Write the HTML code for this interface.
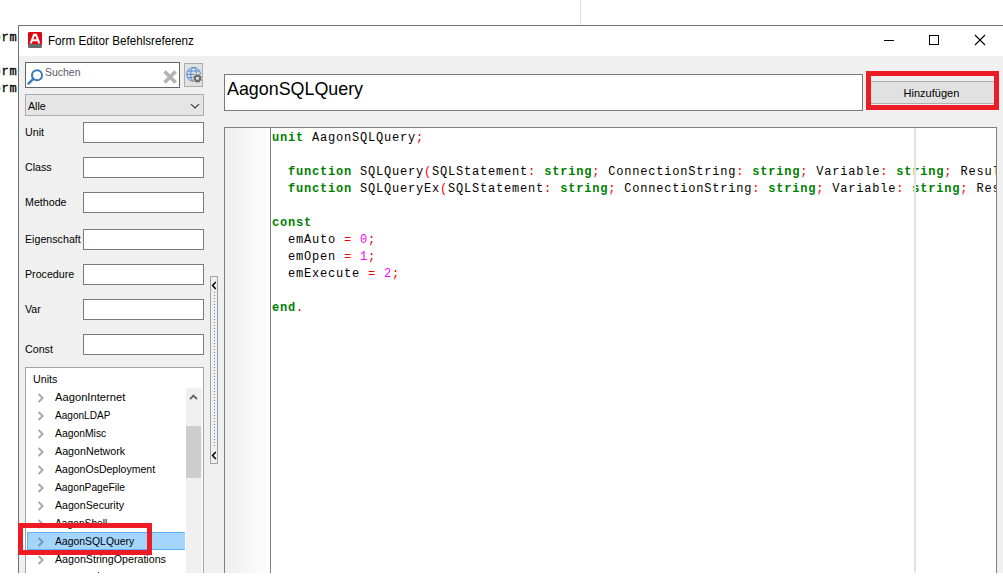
<!DOCTYPE html>
<html><head><meta charset="utf-8">
<style>
*{margin:0;padding:0;box-sizing:border-box}
html,body{width:1003px;height:581px;overflow:hidden;background:#fff;position:relative;font-family:"Liberation Sans",sans-serif;font-size:12px;color:#000}
.a{position:absolute}
.mono{font-family:"Liberation Mono",monospace;font-size:13.333px;white-space:pre;line-height:17px}
.ui{position:absolute;white-space:pre;font-size:11px;line-height:14px;padding-top:0.35px;transform-origin:0 0;color:#000}
.code .k{color:#008000;font-weight:bold}.code .i{color:#000}.code .p{color:#ff0000}.code .n{color:#ff00ff}
.inp{position:absolute;background:#fff;border:1px solid #7a7a7a}
</style></head>
<body>
<!-- background desktop bits -->
<div class="a" style="left:580px;top:0;width:1px;height:25px;background:#e3e3e3"></div>
<div class="a mono" style="left:-6.5px;top:30px;font-size:12px;letter-spacing:0.8px;color:#000;-webkit-text-stroke:0.3px #000">orm</div>
<div class="a mono" style="left:-6.5px;top:64px;font-size:12px;letter-spacing:0.8px;color:#000;-webkit-text-stroke:0.3px #000">orm</div>
<div class="a mono" style="left:-6.5px;top:81px;font-size:12px;letter-spacing:0.8px;color:#000;-webkit-text-stroke:0.3px #000">orm</div>

<!-- window -->
<div id="win" class="a" style="left:18px;top:25px;width:1000px;height:548px;background:#f0f0f0;border-left:1px solid #707070;border-top:1px solid #707070">
</div>
<!-- title bar -->
<div class="a" style="left:19px;top:26px;width:990px;height:30px;background:#fff"></div>
<!-- app icon -->
<div class="a" style="left:28px;top:32px;width:14px;height:16px;border-radius:1.5px;background:#6b6b6b"></div>
<div class="a" style="left:28px;top:32px;width:14px;height:12px;border-radius:1.5px 1.5px 0 0;background:#e30613"></div>
<svg class="a" style="left:28px;top:32px" width="14" height="16" viewBox="0 0 14 16"><path d="M2.7 11.4 L6 2.9 L8 2.9 L11.3 11.4 M4.4 8.3 L9.6 8.3" stroke="#fff" stroke-width="2.1" fill="none"/></svg>
<div class="ui" style="left:48px;top:34px;font-size:12px;transform:scaleX(0.972)">Form Editor Befehlsreferenz</div>
<!-- caption buttons -->
<div class="a" style="left:884px;top:40px;width:10px;height:1px;background:#000"></div>
<div class="a" style="left:929px;top:35px;width:10px;height:10px;border:1px solid #000"></div>
<svg class="a" style="left:974px;top:34px" width="12" height="12" viewBox="0 0 12 12"><path d="M1 1 L11 11 M11 1 L1 11" stroke="#000" stroke-width="1.1"/></svg>

<!-- search box -->
<div class="inp" style="left:25px;top:62px;width:155px;height:26px;border-color:#646464"></div>
<svg class="a" style="left:24px;top:66px" width="20" height="20" viewBox="0 0 20 20"><circle cx="13" cy="9.3" r="5" stroke="#3a78c0" stroke-width="2" fill="none"/><path d="M9.4 12.8 L4.5 17.6" stroke="#3a78c0" stroke-width="2.4" stroke-linecap="round"/></svg>
<div class="ui" style="left:45px;top:64.3px;color:#5a5a66;transform:scaleX(0.95)">Suchen</div>
<svg class="a" style="left:162px;top:69px" width="16" height="16" viewBox="0 0 16 16"><path d="M2.6 2.6 L13.6 13.6 M13.6 2.6 L2.6 13.6" stroke="#b2b2b2" stroke-width="3.6"/></svg>
<!-- globe button -->
<div class="a" style="left:184px;top:63px;width:19px;height:24px;background:#e1e1e1;border:1px solid #adadad"></div>
<svg class="a" style="left:184px;top:63px" width="19" height="24" viewBox="0 0 19 24">
 <g stroke="#4a86d0" stroke-width="1" fill="none">
  <circle cx="9.6" cy="11.4" r="6.9"/>
  <ellipse cx="9.6" cy="11.4" rx="2.9" ry="6.9"/>
  <path d="M2.7 11.4 H16.5 M3.8 8 H15.4 M3.8 14.8 H15.4"/>
 </g>
 <circle cx="13.5" cy="15.3" r="5" fill="#e1e1e1"/>
 <circle cx="13.5" cy="15.3" r="2.6" stroke="#6e6e6e" stroke-width="2" fill="none"/>
 <path d="M16.27 16.45L17.57 16.98M14.65 18.07L15.18 19.37M12.35 18.07L11.82 19.37M10.73 16.45L9.43 16.98M10.73 14.15L9.43 13.62M12.35 12.53L11.82 11.23M14.65 12.53L15.18 11.23M16.27 14.15L17.57 13.62" stroke="#6e6e6e" stroke-width="1.7"/>
</svg>
<!-- dropdown -->
<div class="a" style="left:25px;top:94px;width:179px;height:22px;background:#e5e5e5;border:1px solid #adadad"></div>
<div class="ui" style="left:28px;top:99px;transform:scaleX(0.97)">Alle</div>
<svg class="a" style="left:189px;top:101px" width="12" height="9" viewBox="0 0 12 9"><path d="M2 3.1 L6 7 L10 3.1" stroke="#333" stroke-width="1.1" fill="none"/></svg>

<!-- fields -->
<div class="ui" style="left:24.6px;top:125px;transform:scaleX(0.97)">Unit</div>
<div class="inp" style="left:83px;top:122px;width:121px;height:21px"></div>
<div class="ui" style="left:24.6px;top:160px;transform:scaleX(0.97)">Class</div>
<div class="inp" style="left:83px;top:157px;width:121px;height:21px"></div>
<div class="ui" style="left:24.6px;top:195px;transform:scaleX(0.97)">Methode</div>
<div class="inp" style="left:83px;top:192px;width:121px;height:21px"></div>
<div class="ui" style="left:24.6px;top:232px;transform:scaleX(0.97)">Eigenschaft</div>
<div class="inp" style="left:83px;top:229px;width:121px;height:21px"></div>
<div class="ui" style="left:24.6px;top:267px;transform:scaleX(0.97)">Procedure</div>
<div class="inp" style="left:83px;top:264px;width:121px;height:21px"></div>
<div class="ui" style="left:24.6px;top:302px;transform:scaleX(0.97)">Var</div>
<div class="inp" style="left:83px;top:299px;width:121px;height:21px"></div>
<div class="ui" style="left:24.6px;top:342px;transform:scaleX(0.97)">Const</div>
<div class="inp" style="left:83px;top:334px;width:121px;height:21px"></div>

<!-- tree -->
<div id="tree" class="a" style="left:25px;top:367px;width:179px;height:220px;background:#fff;border:1px solid #a0a3a9;overflow:hidden">
 <div class="ui" style="left:6.8px;top:3.2px;transform:scaleX(0.97)">Units</div>
 <div class="a" style="left:1px;top:164px;width:158px;height:18px;background:#a4d6fd;border:1px solid #5db3fc;border-right:none"></div>
 <div id="rows" class="a" style="left:0;top:20px;width:160px">
 <div class="a" style="left:0;top:0px;width:160px;height:18px"><svg class="a" style="left:11px;top:4.6px" width="8" height="10" viewBox="0 0 8 10"><path d="M1.6 1 L5.6 5 L1.6 9" stroke="#a8a8a8" stroke-width="1.9" fill="none"/></svg><div class="ui" style="left:29px;top:0;line-height:18px;transform:scaleX(1.017)">AagonInternet</div></div>
 <div class="a" style="left:0;top:18px;width:160px;height:18px"><svg class="a" style="left:11px;top:4.6px" width="8" height="10" viewBox="0 0 8 10"><path d="M1.6 1 L5.6 5 L1.6 9" stroke="#a8a8a8" stroke-width="1.9" fill="none"/></svg><div class="ui" style="left:29px;top:0;line-height:18px;transform:scaleX(0.915)">AagonLDAP</div></div>
 <div class="a" style="left:0;top:36px;width:160px;height:18px"><svg class="a" style="left:11px;top:4.6px" width="8" height="10" viewBox="0 0 8 10"><path d="M1.6 1 L5.6 5 L1.6 9" stroke="#a8a8a8" stroke-width="1.9" fill="none"/></svg><div class="ui" style="left:29px;top:0;line-height:18px;transform:scaleX(0.942)">AagonMisc</div></div>
 <div class="a" style="left:0;top:54px;width:160px;height:18px"><svg class="a" style="left:11px;top:4.6px" width="8" height="10" viewBox="0 0 8 10"><path d="M1.6 1 L5.6 5 L1.6 9" stroke="#a8a8a8" stroke-width="1.9" fill="none"/></svg><div class="ui" style="left:29px;top:0;line-height:18px;transform:scaleX(0.973)">AagonNetwork</div></div>
 <div class="a" style="left:0;top:72px;width:160px;height:18px"><svg class="a" style="left:11px;top:4.6px" width="8" height="10" viewBox="0 0 8 10"><path d="M1.6 1 L5.6 5 L1.6 9" stroke="#a8a8a8" stroke-width="1.9" fill="none"/></svg><div class="ui" style="left:29px;top:0;line-height:18px;transform:scaleX(0.957)">AagonOsDeployment</div></div>
 <div class="a" style="left:0;top:90px;width:160px;height:18px"><svg class="a" style="left:11px;top:4.6px" width="8" height="10" viewBox="0 0 8 10"><path d="M1.6 1 L5.6 5 L1.6 9" stroke="#a8a8a8" stroke-width="1.9" fill="none"/></svg><div class="ui" style="left:29px;top:0;line-height:18px;transform:scaleX(0.93)">AagonPageFile</div></div>
 <div class="a" style="left:0;top:108px;width:160px;height:18px"><svg class="a" style="left:11px;top:4.6px" width="8" height="10" viewBox="0 0 8 10"><path d="M1.6 1 L5.6 5 L1.6 9" stroke="#a8a8a8" stroke-width="1.9" fill="none"/></svg><div class="ui" style="left:29px;top:0;line-height:18px;transform:scaleX(0.964)">AagonSecurity</div></div>
 <div class="a" style="left:0;top:126px;width:160px;height:18px"><svg class="a" style="left:11px;top:4.6px" width="8" height="10" viewBox="0 0 8 10"><path d="M1.6 1 L5.6 5 L1.6 9" stroke="#a8a8a8" stroke-width="1.9" fill="none"/></svg><div class="ui" style="left:29px;top:0;line-height:18px;transform:scaleX(0.93)">AagonShell</div></div>
 <div class="a" style="left:0;top:144px;width:160px;height:18px"><svg class="a" style="left:11px;top:4.6px" width="8" height="10" viewBox="0 0 8 10"><path d="M1.6 1 L5.6 5 L1.6 9" stroke="#7592ad" stroke-width="1.9" fill="none"/></svg><div class="ui" style="left:29px;top:0;line-height:18px;transform:scaleX(0.946)">AagonSQLQuery</div></div>
 <div class="a" style="left:0;top:162px;width:160px;height:18px"><svg class="a" style="left:11px;top:4.6px" width="8" height="10" viewBox="0 0 8 10"><path d="M1.6 1 L5.6 5 L1.6 9" stroke="#a8a8a8" stroke-width="1.9" fill="none"/></svg><div class="ui" style="left:29px;top:0;line-height:18px;transform:scaleX(0.97)">AagonStringOperations</div></div>
 </div>
 <div class="a" style="left:160px;top:20px;width:16px;height:200px;background:#f0f0f0"></div>
 <div class="a" style="left:160px;top:58px;width:15px;height:52px;background:#cdcdcd"></div>
 <svg class="a" style="left:160px;top:20px" width="15" height="17" viewBox="0 0 15 17"><path d="M4 11.2 L7.5 7.7 L11 11.2" stroke="#606060" stroke-width="1.9" fill="none"/></svg>
</div>

<!-- splitter -->
<div class="a" style="left:210px;top:276px;width:8px;height:188px;background:#f0f0f0;border:1px solid #a0a0a0"></div>
<svg class="a" style="left:211px;top:281px" width="6" height="9" viewBox="0 0 6 9"><path d="M4.8 1 L1.6 4.5 L4.8 8" stroke="#000" stroke-width="1.5" fill="none"/></svg>
<svg class="a" style="left:211px;top:451px" width="6" height="9" viewBox="0 0 6 9"><path d="M4.8 1 L1.6 4.5 L4.8 8" stroke="#000" stroke-width="1.5" fill="none"/></svg>
<div class="a" style="left:214px;top:292px;width:1px;height:1px;background:#3a8ee6"></div><div class="a" style="left:214px;top:295px;width:1px;height:1px;background:#3a8ee6"></div><div class="a" style="left:214px;top:298px;width:1px;height:1px;background:#3a8ee6"></div><div class="a" style="left:214px;top:301px;width:1px;height:1px;background:#3a8ee6"></div><div class="a" style="left:214px;top:304px;width:1px;height:1px;background:#3a8ee6"></div><div class="a" style="left:214px;top:307px;width:1px;height:1px;background:#3a8ee6"></div><div class="a" style="left:214px;top:310px;width:1px;height:1px;background:#3a8ee6"></div><div class="a" style="left:214px;top:313px;width:1px;height:1px;background:#3a8ee6"></div><div class="a" style="left:214px;top:316px;width:1px;height:1px;background:#3a8ee6"></div><div class="a" style="left:214px;top:319px;width:1px;height:1px;background:#3a8ee6"></div><div class="a" style="left:214px;top:322px;width:1px;height:1px;background:#3a8ee6"></div><div class="a" style="left:214px;top:325px;width:1px;height:1px;background:#3a8ee6"></div><div class="a" style="left:214px;top:328px;width:1px;height:1px;background:#3a8ee6"></div><div class="a" style="left:214px;top:331px;width:1px;height:1px;background:#3a8ee6"></div><div class="a" style="left:214px;top:334px;width:1px;height:1px;background:#3a8ee6"></div><div class="a" style="left:214px;top:337px;width:1px;height:1px;background:#3a8ee6"></div><div class="a" style="left:214px;top:340px;width:1px;height:1px;background:#3a8ee6"></div><div class="a" style="left:214px;top:343px;width:1px;height:1px;background:#3a8ee6"></div><div class="a" style="left:214px;top:346px;width:1px;height:1px;background:#3a8ee6"></div><div class="a" style="left:214px;top:349px;width:1px;height:1px;background:#3a8ee6"></div><div class="a" style="left:214px;top:352px;width:1px;height:1px;background:#3a8ee6"></div><div class="a" style="left:214px;top:355px;width:1px;height:1px;background:#3a8ee6"></div><div class="a" style="left:214px;top:358px;width:1px;height:1px;background:#3a8ee6"></div><div class="a" style="left:214px;top:361px;width:1px;height:1px;background:#3a8ee6"></div><div class="a" style="left:214px;top:364px;width:1px;height:1px;background:#3a8ee6"></div><div class="a" style="left:214px;top:367px;width:1px;height:1px;background:#3a8ee6"></div><div class="a" style="left:214px;top:370px;width:1px;height:1px;background:#3a8ee6"></div><div class="a" style="left:214px;top:373px;width:1px;height:1px;background:#3a8ee6"></div><div class="a" style="left:214px;top:376px;width:1px;height:1px;background:#3a8ee6"></div><div class="a" style="left:214px;top:379px;width:1px;height:1px;background:#3a8ee6"></div><div class="a" style="left:214px;top:382px;width:1px;height:1px;background:#3a8ee6"></div><div class="a" style="left:214px;top:385px;width:1px;height:1px;background:#3a8ee6"></div><div class="a" style="left:214px;top:388px;width:1px;height:1px;background:#3a8ee6"></div><div class="a" style="left:214px;top:391px;width:1px;height:1px;background:#3a8ee6"></div><div class="a" style="left:214px;top:394px;width:1px;height:1px;background:#3a8ee6"></div><div class="a" style="left:214px;top:397px;width:1px;height:1px;background:#3a8ee6"></div><div class="a" style="left:214px;top:400px;width:1px;height:1px;background:#3a8ee6"></div><div class="a" style="left:214px;top:403px;width:1px;height:1px;background:#3a8ee6"></div><div class="a" style="left:214px;top:406px;width:1px;height:1px;background:#3a8ee6"></div><div class="a" style="left:214px;top:409px;width:1px;height:1px;background:#3a8ee6"></div><div class="a" style="left:214px;top:412px;width:1px;height:1px;background:#3a8ee6"></div><div class="a" style="left:214px;top:415px;width:1px;height:1px;background:#3a8ee6"></div><div class="a" style="left:214px;top:418px;width:1px;height:1px;background:#3a8ee6"></div><div class="a" style="left:214px;top:421px;width:1px;height:1px;background:#3a8ee6"></div><div class="a" style="left:214px;top:424px;width:1px;height:1px;background:#3a8ee6"></div><div class="a" style="left:214px;top:427px;width:1px;height:1px;background:#3a8ee6"></div><div class="a" style="left:214px;top:430px;width:1px;height:1px;background:#3a8ee6"></div><div class="a" style="left:214px;top:433px;width:1px;height:1px;background:#3a8ee6"></div><div class="a" style="left:214px;top:436px;width:1px;height:1px;background:#3a8ee6"></div><div class="a" style="left:214px;top:439px;width:1px;height:1px;background:#3a8ee6"></div><div class="a" style="left:214px;top:442px;width:1px;height:1px;background:#3a8ee6"></div><div class="a" style="left:214px;top:445px;width:1px;height:1px;background:#3a8ee6"></div>

<!-- title input -->
<div class="inp" style="left:224px;top:74px;width:639px;height:37px"></div>
<div class="ui" style="left:227px;top:79.1px;font-size:19px;line-height:20px;transform:scaleX(0.94)">AagonSQLQuery</div>

<!-- button -->
<div class="a" style="left:866px;top:71px;width:133px;height:39px;background:#f0f0f0"></div>
<div class="a" style="left:871px;top:81px;width:123px;height:23px;background:#e1e1e1;border-top:1px solid #adadad;border-bottom:1px solid #adadad"></div>
<div class="ui" style="left:903.6px;top:85.3px;transform:scaleX(1.0)">Hinzufügen</div>
<div class="a" style="left:866px;top:71px;width:133px;height:39px;border:5px solid #ed1c24"></div>

<!-- editor -->
<div id="ed" class="a" style="left:224px;top:127px;width:773px;height:460px;background:#fff;border:1px solid #808080;overflow:hidden">
 <div class="a" style="left:0;top:0;width:45px;height:460px;background:linear-gradient(to right,#efefef 0.0px,#efefef 5.0px,#f1f1f1 5.0px,#f1f1f1 10.0px,#f2f2f2 10.0px,#f2f2f2 15.0px,#f4f4f4 15.0px,#f4f4f4 20.0px,#f6f6f6 20.0px,#f6f6f6 25.0px,#f8f8f8 25.0px,#f8f8f8 30.0px,#fafafa 30.0px,#fafafa 35.0px,#fbfbfb 35.0px,#fbfbfb 40.0px,#fdfdfd 40.0px,#fdfdfd 45.0px)"></div>
 <div class="a" style="left:45px;top:0;width:1px;height:460px;background:#808080"></div>
 <div class="a mono code" style="left:47px;top:2.2px;font-size:12px;letter-spacing:0.8px"><span class="k">unit</span> <span class="i">AagonSQLQuery</span><span class="p">;</span>

  <span class="k">function</span> <span class="i">SQLQuery</span><span class="p">(</span><span class="i">SQLStatement</span><span class="p">:</span> <span class="k">string</span><span class="p">;</span> <span class="i">ConnectionString</span><span class="p">:</span> <span class="k">string</span><span class="p">;</span> <span class="i">Variable</span><span class="p">:</span> <span class="k">string</span><span class="p">;</span> <span class="i">Result</span><span class="p">:</span> <span class="k">string</span><span class="p">):</span> <span class="i">Boolean</span><span class="p">;</span>
  <span class="k">function</span> <span class="i">SQLQueryEx</span><span class="p">(</span><span class="i">SQLStatement</span><span class="p">:</span> <span class="k">string</span><span class="p">;</span> <span class="i">ConnectionString</span><span class="p">:</span> <span class="k">string</span><span class="p">;</span> <span class="i">Variable</span><span class="p">:</span> <span class="k">string</span><span class="p">;</span> <span class="i">Result</span><span class="p">:</span> <span class="k">string</span><span class="p">):</span> <span class="i">Boolean</span><span class="p">;</span>

<span class="k">const</span>
  <span class="i">emAuto</span> <span class="p">=</span> <span class="n">0</span><span class="p">;</span>
  <span class="i">emOpen</span> <span class="p">=</span> <span class="n">1</span><span class="p">;</span>
  <span class="i">emExecute</span> <span class="p">=</span> <span class="n">2</span><span class="p">;</span>

<span class="k">end</span><span class="p">.</span></div>
 <div class="a" style="left:689px;top:0;width:2px;height:460px;background:#e3e3e3"></div>
</div>
<div class="a" style="left:23px;top:528px;width:2px;height:22px;background:#fff"></div>
<div class="a" style="left:98px;top:572px;width:1px;height:1px;background:#444"></div>
<div class="a" style="left:18px;top:523px;width:134px;height:32px;border:5px solid #ed1c24"></div>
<div class="a" style="left:0;top:573px;width:1003px;height:8px;background:#fff"></div>
</body></html>
